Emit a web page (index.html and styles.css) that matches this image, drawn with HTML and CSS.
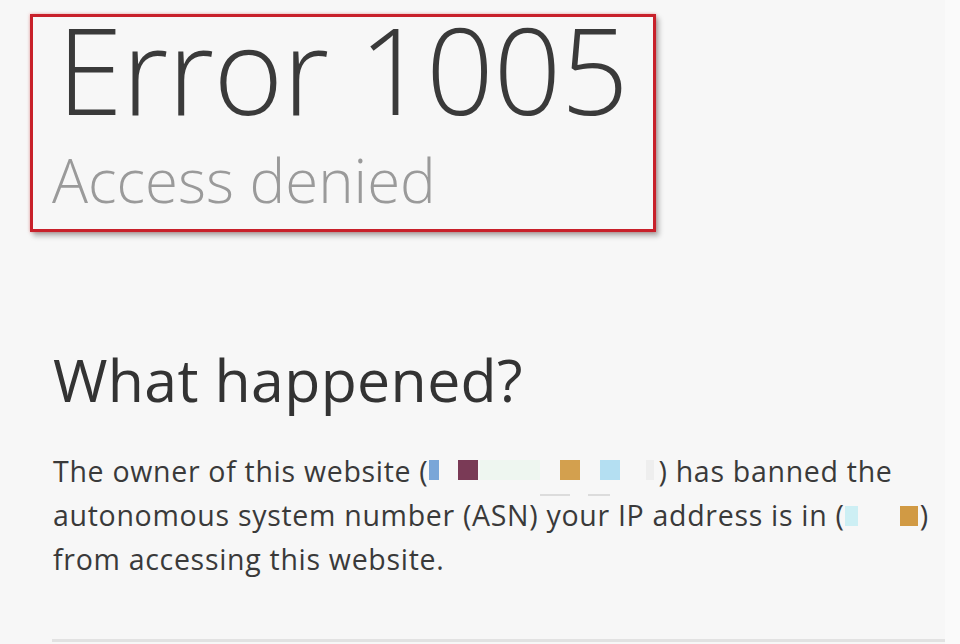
FILE: index.html
```html
<!DOCTYPE html>
<html lang="en">
<head>
<meta charset="utf-8">
<title>Error 1005</title>
<link rel="stylesheet" href="styles.css">
</head>
<body>
<div class="page">
  <header class="error-box">
    <h1 class="code">Error 1005</h1>
    <h2 class="type">Access denied</h2>
  </header>
  <section class="details">
    <h2 class="heading">What happened?</h2>
    <p class="text">The owner of this website (<span class="redact r1"><i class="blob b-blue"></i><i class="blob b-purple"></i><i class="blob b-green"></i><i class="blob b-orange"></i><i class="blob b-sky"></i><i class="blob b-ghost"></i><i class="mark m1"></i><i class="mark m2"></i></span>) has banned the autonomous system number (ASN) your IP address is in (<span class="redact r2"><i class="blob b-cyan"></i><i class="blob b-orange2"></i></span>) from accessing this website.</p>
  </section>
  <div class="rule"></div>
</div>
</body>
</html>
```
FILE: styles.css
```css
html, body {
  margin: 0;
  padding: 0;
}
body {
  background: #fafafa;
  font-family: "Open Sans", "Liberation Sans", sans-serif;
  color: #333;
  width: 960px;
  height: 644px;
  overflow: hidden;
}
.page {
  width: 945px;
  height: 644px;
  background: #f7f7f7;
  display: flex;
  flex-direction: column;
}
.error-box {
  margin: 14px 0 0 30px;
  width: 596px;
  height: 212px;
  border: 3px solid #c8202a;
  box-shadow: 3px 4px 5px rgba(0,0,0,0.28), 0 0 3px rgba(230,80,80,0.5);
  padding: 0 0 0 24px;
  box-sizing: content-box;
  white-space: nowrap;
}
.code {
  margin: 0;
  font-weight: 300;
  font-size: 119px;
  line-height: 104px;
  letter-spacing: -0.6px;
  color: #3a3a3a;
}
.type {
  margin: 24px 0 0 -5px;
  font-weight: 300;
  font-size: 60px;
  line-height: 70px;
  color: #9a9a9a;
}
.details {
  padding: 112px 0 0 53px;
}
.heading {
  margin: 0;
  font-weight: 400;
  font-size: 59px;
  line-height: 70px;
  letter-spacing: 0.35px;
  color: #333;
}
.text {
  margin: 35px 0 0 0;
  font-size: 28.5px;
  line-height: 44px;
  letter-spacing: 0.7px;
  color: #3a3a3a;
  width: 880px;
}
.redact {
  display: inline-block;
  vertical-align: -4px;
  height: 28px;
  position: relative;
}
.r1 { width: 230px; }
.r2 { width: 75px; }
.blob {
  position: absolute;
  top: 2px;
  width: 20px;
  height: 20px;
}
.b-blue { left: 1px; width: 10px; background: #7aa6d8; }
.b-purple { left: 30px; background: #7a3a56; }
.b-green { left: 52px; width: 60px; background: #eef6f0; }
.b-orange { left: 132px; background: #d3a04e; }
.b-sky { left: 172px; background: #b4dff2; }
.b-ghost { left: 218px; width: 8px; background: #eeeeee; }
.b-cyan { left: 0; width: 13px; background: #cdeff4; top: 4px; }
.b-orange2 { left: 55px; width: 18px; background: #d19a44; top: 4px; }
.mark {
  position: absolute;
  top: 36px;
  height: 2px;
  background: #dcdcdc;
}
.m1 { left: 112px; width: 30px; }
.m2 { left: 160px; width: 22px; }
.rule {
  margin: auto 0 2px 52px;
  height: 3px;
  background: #e2e2e2;
}
```
